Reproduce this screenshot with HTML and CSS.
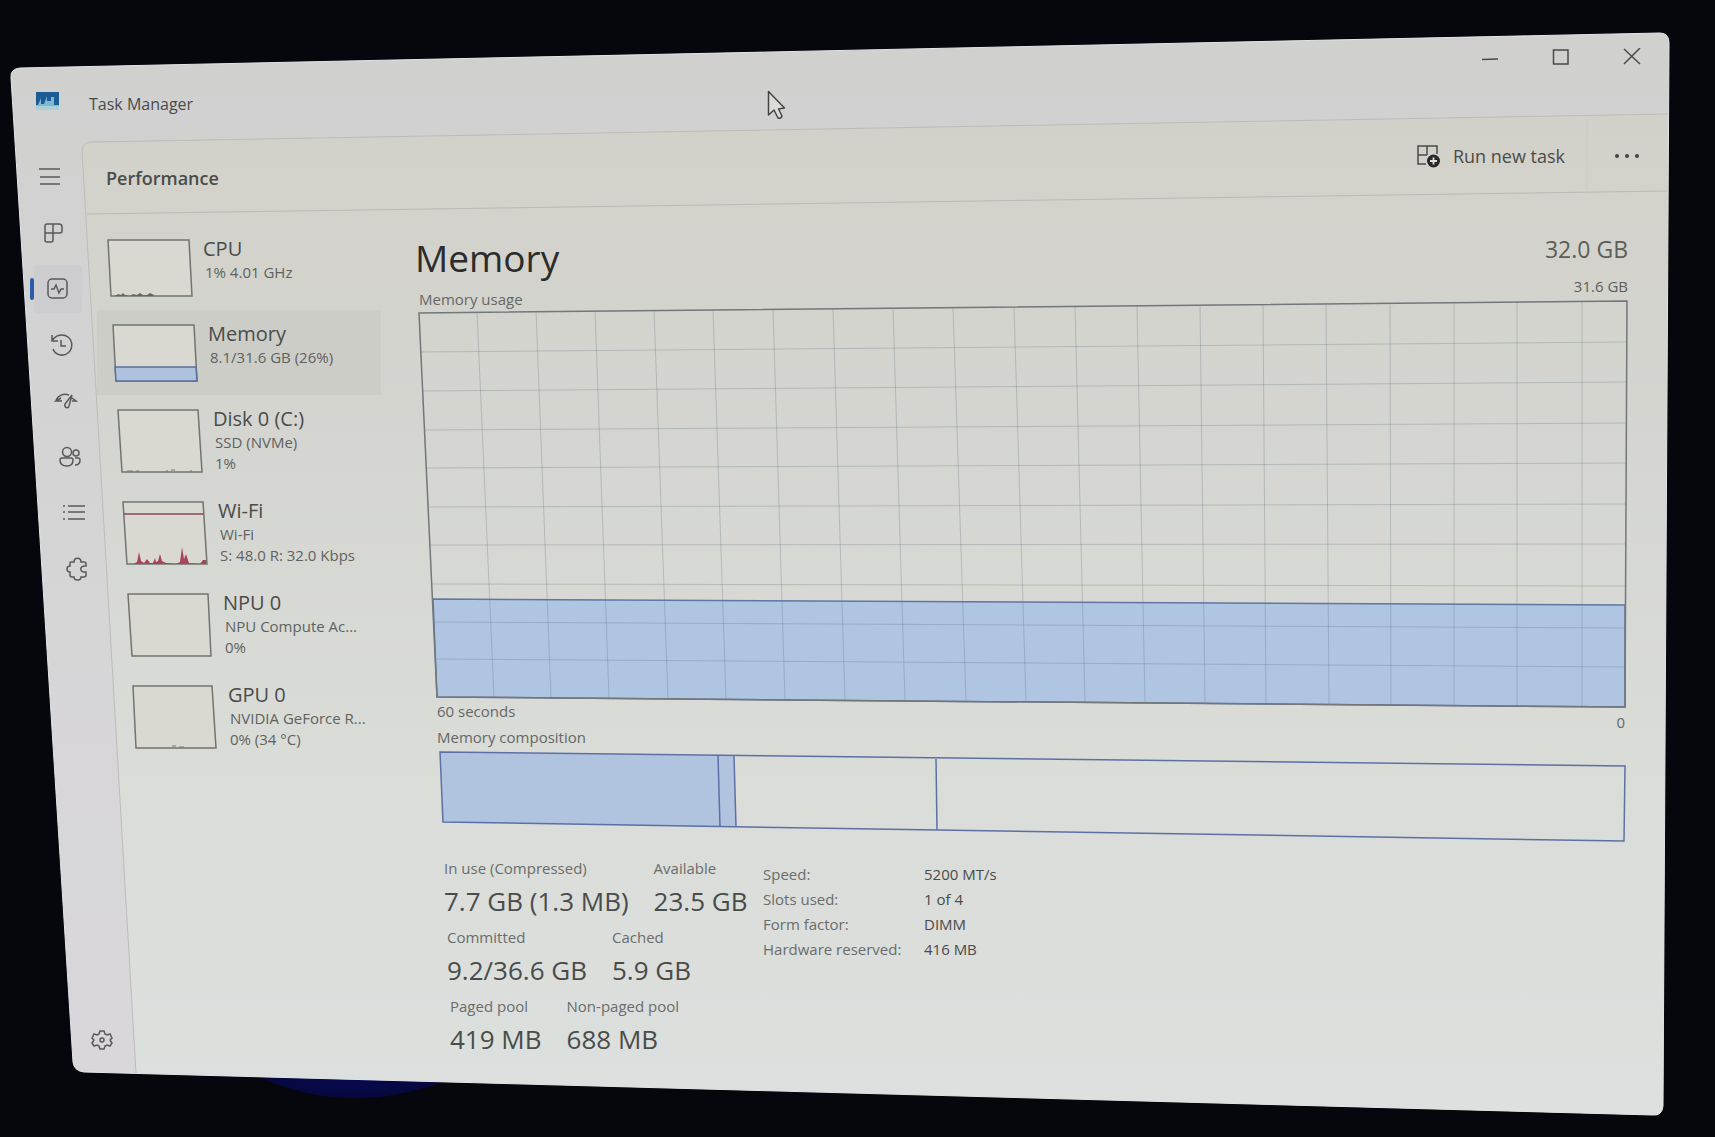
FILE: index.html
```html
<!DOCTYPE html>
<html lang="en">
<head>
    <meta charset="UTF-8">
    <meta name="viewport" content="width=device-width, initial-scale=1.0">
    <title>Task Manager</title>
    <link rel="stylesheet" href="styles.css">
</head>
<body>
    <div class="desktop">
        <!-- tilted window surface -->
        <svg class="backdrop" viewBox="0 0 1715 1137" preserveAspectRatio="none" aria-hidden="true">
            <defs>
                <linearGradient id="chrome" x1="0" y1="0" x2="0" y2="1">
                    <stop offset="0" stop-color="#d0d0cf"/>
                    <stop offset="0.5" stop-color="#d6d5d6"/>
                    <stop offset="1" stop-color="#d9d7db"/>
                </linearGradient>
                <linearGradient id="panel" x1="0" y1="0" x2="0" y2="1">
                    <stop offset="0" stop-color="#d2d1c9"/>
                    <stop offset="0.3" stop-color="#d4d5d0"/>
                    <stop offset="0.65" stop-color="#dadcd8"/>
                    <stop offset="1" stop-color="#dce0de"/>
                </linearGradient>
                <radialGradient id="glow">
                    <stop offset="0" stop-color="#080a50"/>
                    <stop offset="1" stop-color="#06073a"/>
                </radialGradient>
            </defs>
            <path d="M245 1070 Q345 1122 452 1078Z" fill="url(#glow)"/>
            <path d="M20 68 L1660 33 Q1669 33 1669 43 L1663 1106 Q1662 1116 1653 1115 L84 1072 Q74 1071 73 1062 L11 78 Q10 69 20 68Z" fill="url(#chrome)" stroke="#e2e5e8" stroke-width="1"/>
            <path d="M92 142 L1668 114 L1663 1106 Q1662 1115 1653 1115 L136 1073 L82 151 Q82 142 92 142Z" fill="url(#panel)"/>
            <path d="M136 1073 L82 151 Q82 142 92 142 L1668 114" fill="none" stroke="#bcbcb9"/>
            <path d="M87 214 L1667 191" fill="none" stroke="#bab9b3" stroke-width="1"/>
            <path d="M1587 118 L1587 190" stroke="#c9c8c1"/>
        </svg>

        <div class="app">
            <header class="titlebar">
                <div class="brand">
                    <svg width="23" height="18" viewBox="0 0 23 18">
                        <rect width="23" height="18" fill="#7fb7d0"/>
                        <path d="M0 0H23V13H18V5H15V9H11V4L8 12H5V6L2 13H0Z" fill="#1a5c94"/>
                        <path d="M0 14H23V18H0Z" fill="#a9d0da"/>
                    </svg>
                    <span>Task Manager</span>
                </div>
                <div class="controls">
                    <button type="button" aria-label="Minimize"><svg width="18" height="18" viewBox="0 0 18 18"><path d="M1 11.500L17 11"/></svg></button>
                    <button type="button" aria-label="Maximize"><svg width="18" height="18" viewBox="0 0 18 18"><rect x="1.500" y="2" width="14.500" height="14"/></svg></button>
                    <button type="button" aria-label="Close"><svg width="18" height="18" viewBox="0 0 18 18"><path d="M1 1L17 16M17 0L1 16"/></svg></button>
                </div>
            </header>

            <div class="body">
                <nav class="rail">
                    <button type="button" aria-label="Open navigation"><svg width="24" height="24" viewBox="0 0 24 24"><path d="M1 4H22M2 12H22M2 19H22"/></svg></button>
                    <button type="button" aria-label="Processes"><svg width="24" height="24" viewBox="0 0 24 24"><path d="M5 3H17Q20 3 20 6V10Q20 12 18 12H3V5Q3 3 5 3M11 3V19Q11 21 9 21H5Q3 21 3 19V12"/></svg></button>
                    <button type="button" class="active" aria-label="Performance"><svg width="24" height="24" viewBox="0 0 24 24"><rect x="2" y="2" width="19" height="19" rx="4"/><path d="M5 12H8L10 8L13 16L15 12H18"/></svg></button>
                    <button type="button" aria-label="App history"><svg width="24" height="24" viewBox="0 0 24 24"><path d="M2 2V8H8M2 8C5 2 13 0 18 4C23 8 23 16 18 20C13 24 5 22 3 16M11 7V13H16"/></svg></button>
                    <button type="button" aria-label="Startup apps"><svg width="24" height="24" viewBox="0 0 24 24"><path d="M2 12C3 7 9 4 15 6M7 9L2 12L8 12M18 9L22 12L18 12M18 6L11 15C10 19 14 20 15 17L18 6"/></svg></button>
                    <button type="button" aria-label="Users"><svg width="24" height="24" viewBox="0 0 24 24"><circle cx="9" cy="7" r="4.500"/><circle cx="18" cy="8" r="3"/><path d="M4 13H13Q15 13 15 15Q15 21 9 21Q2 21 2 15Q2 13 4 13M17 13H20Q22 13 22 15Q22 20 17 20"/></svg></button>
                    <button type="button" aria-label="Details"><svg width="24" height="24" viewBox="0 0 24 24"><path d="M6 5H23M6 11H23M6 18H23M1 5H3M1 11H3M1 18H3"/></svg></button>
                    <button type="button" aria-label="Services"><svg width="24" height="24" viewBox="0 0 24 24"><path d="M5 5H8C8 0 15 0 15 5H18Q20 5 20 7V9C13 8 13 16 20 15V18Q20 20 18 20H15C15 24 8 24 8 20H6Q4 20 4 18V15C0 15 0 9 4 9V6Q4 5 5 5Z"/></svg></button>
                    <button type="button" class="settings" aria-label="Settings"><svg width="24" height="24" viewBox="0 0 24 24"><path d="M10 3H14L15 6L17 7L20 6L22 10L20 12L22 15L20 18L17 17L15 18L14 21H10L9 18L7 17L4 18L2 15L4 12L2 10L4 6L7 7L9 6Z"/><circle cx="12" cy="12" r="2"/></svg></button>
                </nav>

                <main class="panel">
                    <div class="toolbar">
                        <h2>Performance</h2>
                        <div class="actions">
                            <button type="button" class="run">
                                <svg width="25" height="24" viewBox="0 0 25 24"><path d="M10 20H2V2H21V10M2 11H11M11 2V11" fill="none" stroke="currentColor" stroke-width="1.500"/><circle cx="17.500" cy="17" r="6.500" fill="#292929"/><path d="M14 17H21M17.500 13.500V20.500" stroke="#e2e2dc" stroke-width="1.800"/></svg>
                                Run new task
                            </button>
                            <button type="button" class="more" aria-label="More options"><svg width="28" height="8" viewBox="0 0 28 8"><circle cx="4" cy="4" r="2"/><circle cx="14" cy="4" r="2"/><circle cx="24" cy="4" r="2"/></svg></button>
                        </div>
                    </div>

                    <div class="content">
                        <ul class="devices">
                            <li class="device short">
                                <svg class="thumb" viewBox="0 0 90 58"><path class="frame" d="M1 1H82L85 57H4Z"/><path d="M8 57l3-2 3 1 2-2 2 2 5 1 3-2 4 1 3-2 3 2 4 0 3-2 4 2v1Z" fill="#666"/></svg>
                                <div class="device-text"><h3>CPU</h3><p>1% 4.01 GHz</p></div>
                            </li>
                            <li class="device short selected">
                                <svg class="thumb" viewBox="0 0 90 58"><path class="frame" d="M1 1H82L85 57H4Z"/><path class="memory" d="M3 43H84L85 57H4Z"/></svg>
                                <div class="device-text"><h3>Memory</h3><p>8.1/31.6 GB (26%)</p></div>
                            </li>
                            <li class="device">
                                <svg class="thumb" viewBox="0 0 90 64"><path class="frame" d="M1 1H81L85 63H5Z"/><path d="M10 62H16M19 62H22M49 62H51M54 61H58M73 62H75" stroke="#777" stroke-width="1"/></svg>
                                <div class="device-text"><h3>Disk 0 (C:)</h3><p>SSD (NVMe)</p><p>1%</p></div>
                            </li>
                            <li class="device">
                                <svg class="thumb" viewBox="0 0 90 64"><path class="frame" d="M1 1H81L85 63H5Z"/><path d="M2 13H81" stroke="#85475a" stroke-width="1.500"/><path d="M11 63L15 61L17 51L19 60L22 62L25 58L28 62H31L33 57L34 61L36 60L38 53L40 60L44 62L54 63L58 61L60 46L62 58L64 53L67 62L78 63L81 59H84V63Z" fill="#a84358"/></svg>
                                <div class="device-text"><h3>Wi-Fi</h3><p>Wi-Fi</p><p>S: 48.0 R: 32.0 Kbps</p></div>
                            </li>
                            <li class="device">
                                <svg class="thumb" viewBox="0 0 90 64"><path class="frame" d="M1 1H81L84 63H5Z"/></svg>
                                <div class="device-text"><h3>NPU 0</h3><p>NPU Compute Ac...</p><p>0%</p></div>
                            </li>
                            <li class="device">
                                <svg class="thumb" viewBox="0 0 90 64"><path class="frame" d="M1 1H80L84 63H4Z"/><path d="M40 61H44M47 62H52" stroke="#777" stroke-width="1"/></svg>
                                <div class="device-text"><h3>GPU 0</h3><p>NVIDIA GeForce R...</p><p>0% (34 °C)</p></div>
                            </li>
                        </ul>

                        <section class="memory-view">
                            <div class="heading">
                                <div>
                                    <h1>Memory</h1>
                                    <p class="caption">Memory usage</p>
                                </div>
                                <div class="totals">
                                    <p class="capacity">32.0 GB</p>
                                    <p>31.6 GB</p>
                                </div>
                            </div>

                            <svg class="chart" viewBox="415 300 1213 408" preserveAspectRatio="none" role="img" aria-label="Memory usage, last 60 seconds">
                                <path class="used" d="M433 599L1625 605V707L437 697Z"/>
                                <path class="grid" d="M477 312L494 697M536 311L551 698M595 311L609 698M654 310L668 699M713 310L726 699M773 309L785 700M833 309L845 700M893 308L905 701M953 307L966 701M1014 307L1026 702M1075 306L1085 702M1137 306L1145 703M1200 305L1205 703M1263 304L1266 704M1326 304L1329 704M1390 303L1391 705M1454 303L1454 705M1517 302L1517 706M1582 301L1582 706"/>
                                <path class="grid" d="M421 352L1627 342M423 391L1627 382M425 430L1627 423M427 468L1627 463M428 507L1626 504M430 545L1626 544M432 584L1626 586M434 622L1626 628M436 659L1625 667"/>
                                <path class="outline" d="M419 313L1627 301L1625 707L437 697Z"/>
                            </svg>

                            <div class="axis">
                                <div class="axis-start">
                                    <p>60 seconds</p>
                                    <p>Memory composition</p>
                                </div>
                                <p class="axis-end">0</p>
                            </div>

                            <svg class="composition" viewBox="415 751 1213 91" preserveAspectRatio="none" role="img" aria-label="Memory composition">
                                <path d="M440 752L734 756L736 827L443 822Z" fill="#b0c4df"/>
                                <path class="parts" d="M440 752L1625 766L1624 841L443 822ZM718 755L720 827M734 756L736 827M936 758L937 830"/>
                            </svg>

                            <div class="stats">
                                <div class="figures">
                                    <dl class="pair">
                                        <div><dt>In use (Compressed)</dt><dd>7.7 GB (1.3 MB)</dd></div>
                                        <div><dt>Available</dt><dd>23.5 GB</dd></div>
                                    </dl>
                                    <dl class="pair">
                                        <div><dt>Committed</dt><dd>9.2/36.6 GB</dd></div>
                                        <div><dt>Cached</dt><dd>5.9 GB</dd></div>
                                    </dl>
                                    <dl class="pair">
                                        <div><dt>Paged pool</dt><dd>419 MB</dd></div>
                                        <div><dt>Non-paged pool</dt><dd>688 MB</dd></div>
                                    </dl>
                                </div>
                                <table class="hardware">
                                    <tr><th scope="row">Speed:</th><td>5200 MT/s</td></tr>
                                    <tr><th scope="row">Slots used:</th><td>1 of 4</td></tr>
                                    <tr><th scope="row">Form factor:</th><td>DIMM</td></tr>
                                    <tr><th scope="row">Hardware reserved:</th><td>416 MB</td></tr>
                                </table>
                            </div>
                        </section>
                    </div>
                </main>
            </div>
        </div>

        <svg class="cursor" width="20" height="30" viewBox="0 0 20 30" aria-hidden="true"><path d="M1.500 1.500V25L7 20L11 28Q14 29 15 26L11.500 19L17.500 18Z" fill="#dcdddb" stroke="#444" stroke-width="1.500" stroke-linejoin="round"/></svg>
    </div>
</body>
</html>
```
FILE: styles.css
```css
* {
    box-sizing: border-box;
}

body {
    margin: 0;
    background-color: #05070d;
    color: #4a4c4a;
    font-family: "Open Sans", "Noto Sans", sans-serif;
    font-size: 15px;
    line-height: 20px;
}

h1, h2, h3, p, dl, dd, ul {
    margin: 0;
    padding: 0;
}

button {
    display: flex;
    align-items: center;
    justify-content: center;
    padding: 0;
    border: none;
    background: none;
    color: inherit;
    font: inherit;
}

.desktop {
    position: relative;
    display: grid;
    min-height: 100vh;
}

.backdrop, .app {
    grid-area: 1 / 1;
    width: 100%;
    height: 100%;
}

.app {
    display: flex;
    flex-direction: column;
}

/* title bar */
.titlebar {
    display: flex;
    justify-content: space-between;
    height: 142px;
    padding: 40px 48px 26px 36px;
}

.brand {
    display: flex;
    align-items: flex-start;
    align-self: flex-end;
    gap: 30px;
    height: 24px;
    font-size: 16px;
    line-height: 24px;
}

.controls {
    display: flex;
}

.controls button {
    width: 71px;
    height: 34px;
}

.controls svg {
    fill: none;
    stroke: #4a4a4a;
    stroke-width: 1.5;
}

.body {
    display: grid;
    grid-template-columns: 82px 1fr;
    flex: 1;
}

/* navigation: every row follows the slanted left edge */
.rail {
    display: flex;
    flex-direction: column;
    align-items: flex-start;
    gap: 8px;
    padding: 11px 0 73px 26px;
}

.rail button {
    flex: none;
    width: 48px;
    height: 48px;
    margin-left: calc(var(--row, 0) * 4px);
    border-radius: 4px;
}

.rail svg {
    fill: none;
    stroke: #58595a;
    stroke-width: 1.5;
}

.rail .active {
    position: relative;
    background-color: #cdcccf;
}

.rail .active::before {
    content: "";
    position: absolute;
    left: -4px;
    top: 13px;
    width: 4px;
    height: 22px;
    border-radius: 2px;
    background-color: #2d5cab;
}

.rail .settings {
    margin-top: auto;
}

.rail button:nth-child(2) { --row: 1; }
.rail button:nth-child(3) { --row: 2; }
.rail button:nth-child(4) { --row: 3; }
.rail button:nth-child(5) { --row: 4; }
.rail button:nth-child(6) { --row: 5; }
.rail button:nth-child(7) { --row: 6; }
.rail button:nth-child(8) { --row: 7; }
.rail button:nth-child(9) { --row: 13; }

/* toolbar */
.toolbar {
    display: flex;
    justify-content: space-between;
    height: 83px;
    padding: 0 74px 33px 24px;
}

.toolbar h2 {
    align-self: flex-end;
    font-size: 18px;
    font-weight: 600;
    line-height: 28px;
}

.actions {
    display: flex;
    align-items: flex-start;
    gap: 48px;
}

.run, .more {
    height: 28px;
}

.run {
    gap: 12px;
    font-size: 18px;
}

.more svg {
    fill: #444;
}

.content {
    display: grid;
    grid-template-columns: 333px 1fr;
}

/* device list */
.devices {
    list-style: none;
    padding-left: 10px;
}

.device {
    display: flex;
    gap: 6px;
    width: 284px;
    height: 92px;
    margin-left: calc(var(--row, 0) * 5px);
    padding: 11px 0 0 15px;
}

.device.short {
    height: 85px;
}

.device.selected {
    background-color: #cdcdc7;
}

.device:nth-child(2) { --row: 1; }
.device:nth-child(3) { --row: 2; }
.device:nth-child(4) { --row: 3; }
.device:nth-child(5) { --row: 4; }
.device:nth-child(6) { --row: 5; }

.thumb {
    flex: none;
    width: 90px;
    height: 64px;
    margin-top: 3px;
}

.short .thumb {
    height: 58px;
}

.frame {
    fill: #dad9d1;
    stroke: #717470;
    stroke-width: 1.5;
}

.memory {
    fill: #adc2df;
    stroke: #5a6f99;
    stroke-width: 1.5;
}

.device h3 {
    font-size: 20px;
    font-weight: 400;
    line-height: 26px;
}

.device p {
    padding-left: 2px;
    line-height: 21px;
    color: #606260;
    white-space: nowrap;
}

/* memory details */
.memory-view {
    padding: 9px 87px 0 0;
}

.heading {
    display: flex;
    justify-content: space-between;
}

h1 {
    font-size: 37px;
    font-weight: 400;
    line-height: 48px;
    color: #2c2c2b;
}

.caption {
    padding: 7px 0 0 4px;
    color: #666866;
}

.totals {
    display: flex;
    flex-direction: column;
    gap: 12px;
    text-align: right;
    color: #5c5e5b;
}

.capacity {
    font-size: 23px;
    line-height: 30px;
}

.chart {
    display: block;
    width: 100%;
    height: 408px;
    margin-top: -9px;
    fill: none;
}

.grid {
    stroke: #5a6a7a;
    stroke-opacity: 0.28;
    stroke-width: 1;
}

.used {
    fill: #b0c5e1;
    stroke: #60779f;
    stroke-width: 1.5;
}

.outline {
    stroke: #72777a;
    stroke-width: 1.5;
}

.axis {
    display: flex;
    justify-content: space-between;
    margin-top: -7px;
    color: #656866;
}

.axis-start {
    display: flex;
    flex-direction: column;
    gap: 6px;
    padding-left: 22px;
}

.axis-end {
    padding: 11px 3px 0 0;
}

.composition {
    display: block;
    width: 100%;
    height: 91px;
    margin-top: 4px;
}

.parts {
    fill: none;
    stroke: #5e6fa6;
    stroke-width: 1.5;
}

.stats {
    display: grid;
    grid-template-columns: 319px auto;
    justify-content: start;
    padding: 16px 0 0 29px;
}

.figures {
    display: flex;
    flex-direction: column;
    gap: 3px;
}

.pair {
    display: flex;
    gap: 25px;
    white-space: nowrap;
}

.pair:nth-child(2) {
    padding-left: 3px;
}

.pair:nth-child(3) {
    padding-left: 6px;
}

.pair dt {
    color: #6a6d6b;
}

.pair dd {
    font-size: 26px;
    line-height: 46px;
}

.hardware {
    align-self: start;
    margin-top: 3px;
    border-collapse: collapse;
}

.hardware th, .hardware td {
    height: 25px;
    padding: 0;
    font-weight: 400;
    text-align: left;
}

.hardware th {
    width: 161px;
    color: #6a6d6b;
}

.cursor {
    position: absolute;
    left: 767px;
    top: 90px;
}
```
